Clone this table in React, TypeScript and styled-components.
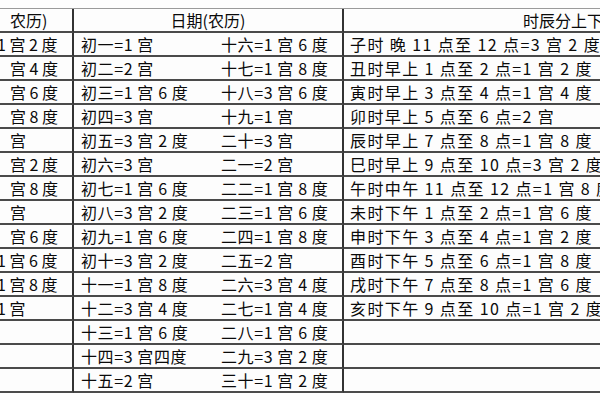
import React from "react"
import styled, { createGlobalStyle } from "styled-components"

const GlobalStyle = createGlobalStyle`
  html, body {
    margin: 0;
    padding: 0;
    background: #fdfdfd;
  }
  body {
    font-family: "Noto Sans CJK SC", "Noto Sans", sans-serif;
    color: #0a0a0a;
  }
`

type Row = {
  lunar: string
  lead: boolean
  early: string
  late: string
  hour: string
}

const rows: Row[] = [
  { lunar: "1 宫 2 度", lead: true, early: "初一=1 宫", late: "十六=1 宫 6 度", hour: "子时 晚 11 点至 12 点=3 宫 2 度" },
  { lunar: "宫 4 度", lead: false, early: "初二=2 宫", late: "十七=1 宫 8 度", hour: "丑时早上 1 点至 2 点=1 宫 2 度" },
  { lunar: "宫 6 度", lead: false, early: "初三=1 宫 6 度", late: "十八=3 宫 6 度", hour: "寅时早上 3 点至 4 点=1 宫 4 度" },
  { lunar: "宫 8 度", lead: false, early: "初四=3 宫", late: "十九=1 宫", hour: "卯时早上 5 点至 6 点=2 宫" },
  { lunar: "宫", lead: false, early: "初五=3 宫 2 度", late: "二十=3 宫", hour: "辰时早上 7 点至 8 点=1 宫 8 度" },
  { lunar: "宫 2 度", lead: false, early: "初六=3 宫", late: "二一=2 宫", hour: "巳时早上 9 点至 10 点=3 宫 2 度" },
  { lunar: "宫 8 度", lead: false, early: "初七=1 宫 6 度", late: "二二=1 宫 8 度", hour: "午时中午 11 点至 12 点=1 宫 8 度" },
  { lunar: "宫", lead: false, early: "初八=3 宫 2 度", late: "二三=1 宫 6 度", hour: "未时下午 1 点至 2 点=1 宫 6 度" },
  { lunar: "宫 6 度", lead: false, early: "初九=1 宫 6 度", late: "二四=1 宫 8 度", hour: "申时下午 3 点至 4 点=1 宫 2 度" },
  { lunar: "1 宫 6 度", lead: true, early: "初十=3 宫 2 度", late: "二五=2 宫", hour: "酉时下午 5 点至 6 点=1 宫 8 度" },
  { lunar: "1 宫 8 度", lead: true, early: "十一=1 宫 8 度", late: "二六=3 宫 4 度", hour: "戌时下午 7 点至 8 点=1 宫 6 度" },
  { lunar: "1 宫", lead: true, early: "十二=3 宫 4 度", late: "二七=1 宫 4 度", hour: "亥时下午 9 点至 10 点=1 宫 2 度" },
  { lunar: "", lead: false, early: "十三=1 宫 6 度", late: "二八=1 宫 6 度", hour: "" },
  { lunar: "", lead: false, early: "十四=3 宫四度", late: "二九=3 宫 2 度", hour: "" },
  { lunar: "", lead: false, early: "十五=2 宫", late: "三十=1 宫 2 度", hour: "" },
]

const Page = styled.div`
  width: 600px;
  height: 400px;
  overflow: hidden;
  padding-top: 8px;
  box-sizing: border-box;
`

const Table = styled.div`
  width: 720px;
  display: grid;
  grid-template-columns: 74px 146px 124px 1fr;
  grid-auto-rows: 24px;
  border-top: 1px solid #9a9a9a;
`

const Cell = styled.div<{ $divider?: boolean }>`
  display: flex;
  align-items: center;
  box-sizing: border-box;
  white-space: nowrap;
  overflow: hidden;
  font-size: 16px;
  line-height: 1;
  border-bottom: 2px solid #4a4a4a;
  border-right: ${({ $divider }) => ($divider ? "2px solid #333" : "none")};
`

const HeaderCell = styled(Cell)<{ $span?: number; $indent?: number }>`
  grid-column: span ${({ $span }) => $span ?? 1};
  justify-content: ${({ $indent }) => ($indent === undefined ? "center" : "flex-start")};
  padding-left: ${({ $indent }) => ($indent === undefined ? 0 : $indent)}px;
`

const LunarCell = styled(Cell)<{ $lead: boolean }>`
  display: block;
  padding-top: 3px;
  text-indent: ${({ $lead }) => ($lead ? -3 : 10)}px;
`

const DayCell = styled(Cell)<{ $pad: number }>`
  padding-left: ${({ $pad }) => $pad}px;
  letter-spacing: 0.6px;
`

const HourCell = styled(Cell)`
  padding-left: 6px;
  letter-spacing: 1.4px;
`

export default function App() {
  return (
    <>
      <GlobalStyle />
      <Page>
        <Table>
          <HeaderCell $divider $indent={10}>农历)</HeaderCell>
          <HeaderCell $divider $span={2}>日期(农历)</HeaderCell>
          <HeaderCell $indent={179}>时辰分上下</HeaderCell>
          {rows.map((r, i) => (
            <React.Fragment key={i}>
              <LunarCell $divider $lead={r.lead}>{r.lunar}</LunarCell>
              <DayCell $pad={7}>{r.early}</DayCell>
              <DayCell $divider $pad={1}>{r.late}</DayCell>
              <HourCell>{r.hour}</HourCell>
            </React.Fragment>
          ))}
        </Table>
      </Page>
    </>
  )
}
